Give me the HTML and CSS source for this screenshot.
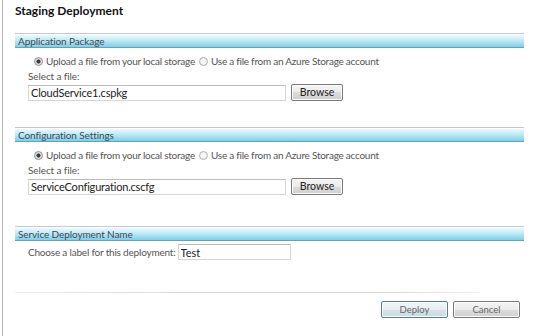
FILE: index.html
```html
<!DOCTYPE html>
<html lang="en">
<head>
  <meta charset="UTF-8" />
  <title>Staging Deployment</title>
  <link rel="stylesheet" href="styles.css">
</head>
<body>
  <div class="dialog">
    <h1 class="title">Staging Deployment</h1>

    <!-- Application Package -->
    <div class="section">
      <div class="sec-head"><div class="bar">Application Package</div></div>
      <div class="sec-body">
        <div class="radios">
          <label><input type="radio" name="pkg" checked> Upload a file from your local storage</label>
          <label><input type="radio" name="pkg"> Use a file from an Azure Storage account</label>
        </div>
        <div class="caption">Select a file:</div>
        <div class="file-row">
          <input class="file" type="text" value="CloudService1.cspkg">
          <button class="btn">Browse</button>
        </div>
      </div>
    </div>

    <!-- Configuration Settings -->
    <div class="section">
      <div class="sec-head"><div class="bar">Configuration Settings</div></div>
      <div class="sec-body">
        <div class="radios">
          <label><input type="radio" name="cfg" checked> Upload a file from your local storage</label>
          <label><input type="radio" name="cfg"> Use a file from an Azure Storage account</label>
        </div>
        <div class="caption">Select a file:</div>
        <div class="file-row">
          <input class="file" type="text" value="ServiceConfiguration.cscfg">
          <button class="btn">Browse</button>
        </div>
      </div>
    </div>

    <!-- Service Deployment Name -->
    <div class="section last">
      <div class="sec-head"><div class="bar">Service Deployment Name</div></div>
      <div class="sec-body">
        <div class="label-row">
          <span>Choose a label for this deployment:</span>
          <input class="name" type="text" value="Test">
        </div>
      </div>
    </div>

    <div class="sep"></div>
    <div class="actions">
      <button class="btn default">Deploy</button>
      <button class="btn">Cancel</button>
    </div>
  </div>
</body>
</html>
```

FILE: styles.css
```css
body { margin: 0; background: #fff; font-family: Lato, "Open Sans", sans-serif; color: #555; }
.dialog { margin-left: 2px; border-left: 1px solid #b4b4b4; height: 336px; box-sizing: border-box; padding: 0 16px 0 12px; }
.title { margin: 0; padding-top: 3px; font-size: 12px; line-height: 16px; font-weight: bold; color: #111; }

.section { margin-top: 14px; }
.section + .section { margin-top: 26px; }
.section.last { margin-top: 31px; }
.sec-head { border-top: 1px solid #c6c8d6; padding-top: 1px; }
.bar { height: 12px; line-height: 13px; font-size: 10px; letter-spacing: -0.1px; padding-left: 3px; color: #3a4a56; background: linear-gradient(#eefafd, #bdeaf6 45%, #80cfe6); border-bottom: 1px solid #6a9fb6; }

.sec-body { padding-left: 13px; }
.radios { margin-top: 7px; font-size: 10px; letter-spacing: -0.25px; line-height: 13px; padding-left: 6px; display: flex; gap: 4px; }
.radios label { display: flex; align-items: center; gap: 3px; }
.radios input { appearance: none; margin: 0; width: 9px; height: 9px; border: 1px solid #b0b0b0; border-radius: 50%; background: radial-gradient(#fff, #e6e6e6); box-sizing: border-box; }
.radios input:checked { background: radial-gradient(#3a3a3a 0 1.8px, #d8d8d8 2.3px, #f2f2f2); border-color: #909090; }

.caption { margin-top: 2px; font-size: 10px; letter-spacing: -0.1px; line-height: 13px; }
.file-row { display: flex; align-items: center; gap: 5px; margin-top: 1px; }
.file { width: 258px; height: 16px; box-sizing: border-box; border: 1px solid #d6d6d6; border-top-color: #bcbcbc; padding: 0 2px; font-family: inherit; font-size: 11px; letter-spacing: -0.2px; color: #222; margin: 0; }

.btn { width: 52px; height: 17px; padding: 0; font-family: inherit; font-size: 10.5px; line-height: 13px; color: #222; border: 1px solid #7a7a7a; border-radius: 2px; background: linear-gradient(#f4f4f4, #ebebeb 50%, #dcdcdc 50%, #d0d0d0); box-shadow: inset 0 0 0 1px #fbfbfb; }

.label-row { display: flex; align-items: center; gap: 2px; margin-top: 3px; font-size: 10px; letter-spacing: -0.2px; line-height: 13px; }
.name { width: 113px; height: 16px; box-sizing: border-box; border: 1px solid #d6d6d6; border-top-color: #bcbcbc; padding: 0 2px; font-family: inherit; font-size: 11px; color: #222; margin: 0; }

.sep { margin-top: 32px; width: 465px; height: 1px; background: linear-gradient(90deg, #ececec, #d8d8d8 40%, #d8d8d8 80%, #f0f0f0); }
.actions { display: flex; justify-content: flex-end; gap: 5px; margin-top: 8px; padding-right: 4px; }
.actions .btn { width: 67px; height: 17px; font-size: 9.5px; color: #666; }
.actions .btn.default { border-color: #4f7f99; background: linear-gradient(#f2f6f8, #e6eef2 50%, #d6e2e8 50%, #ccdae0); }
```
